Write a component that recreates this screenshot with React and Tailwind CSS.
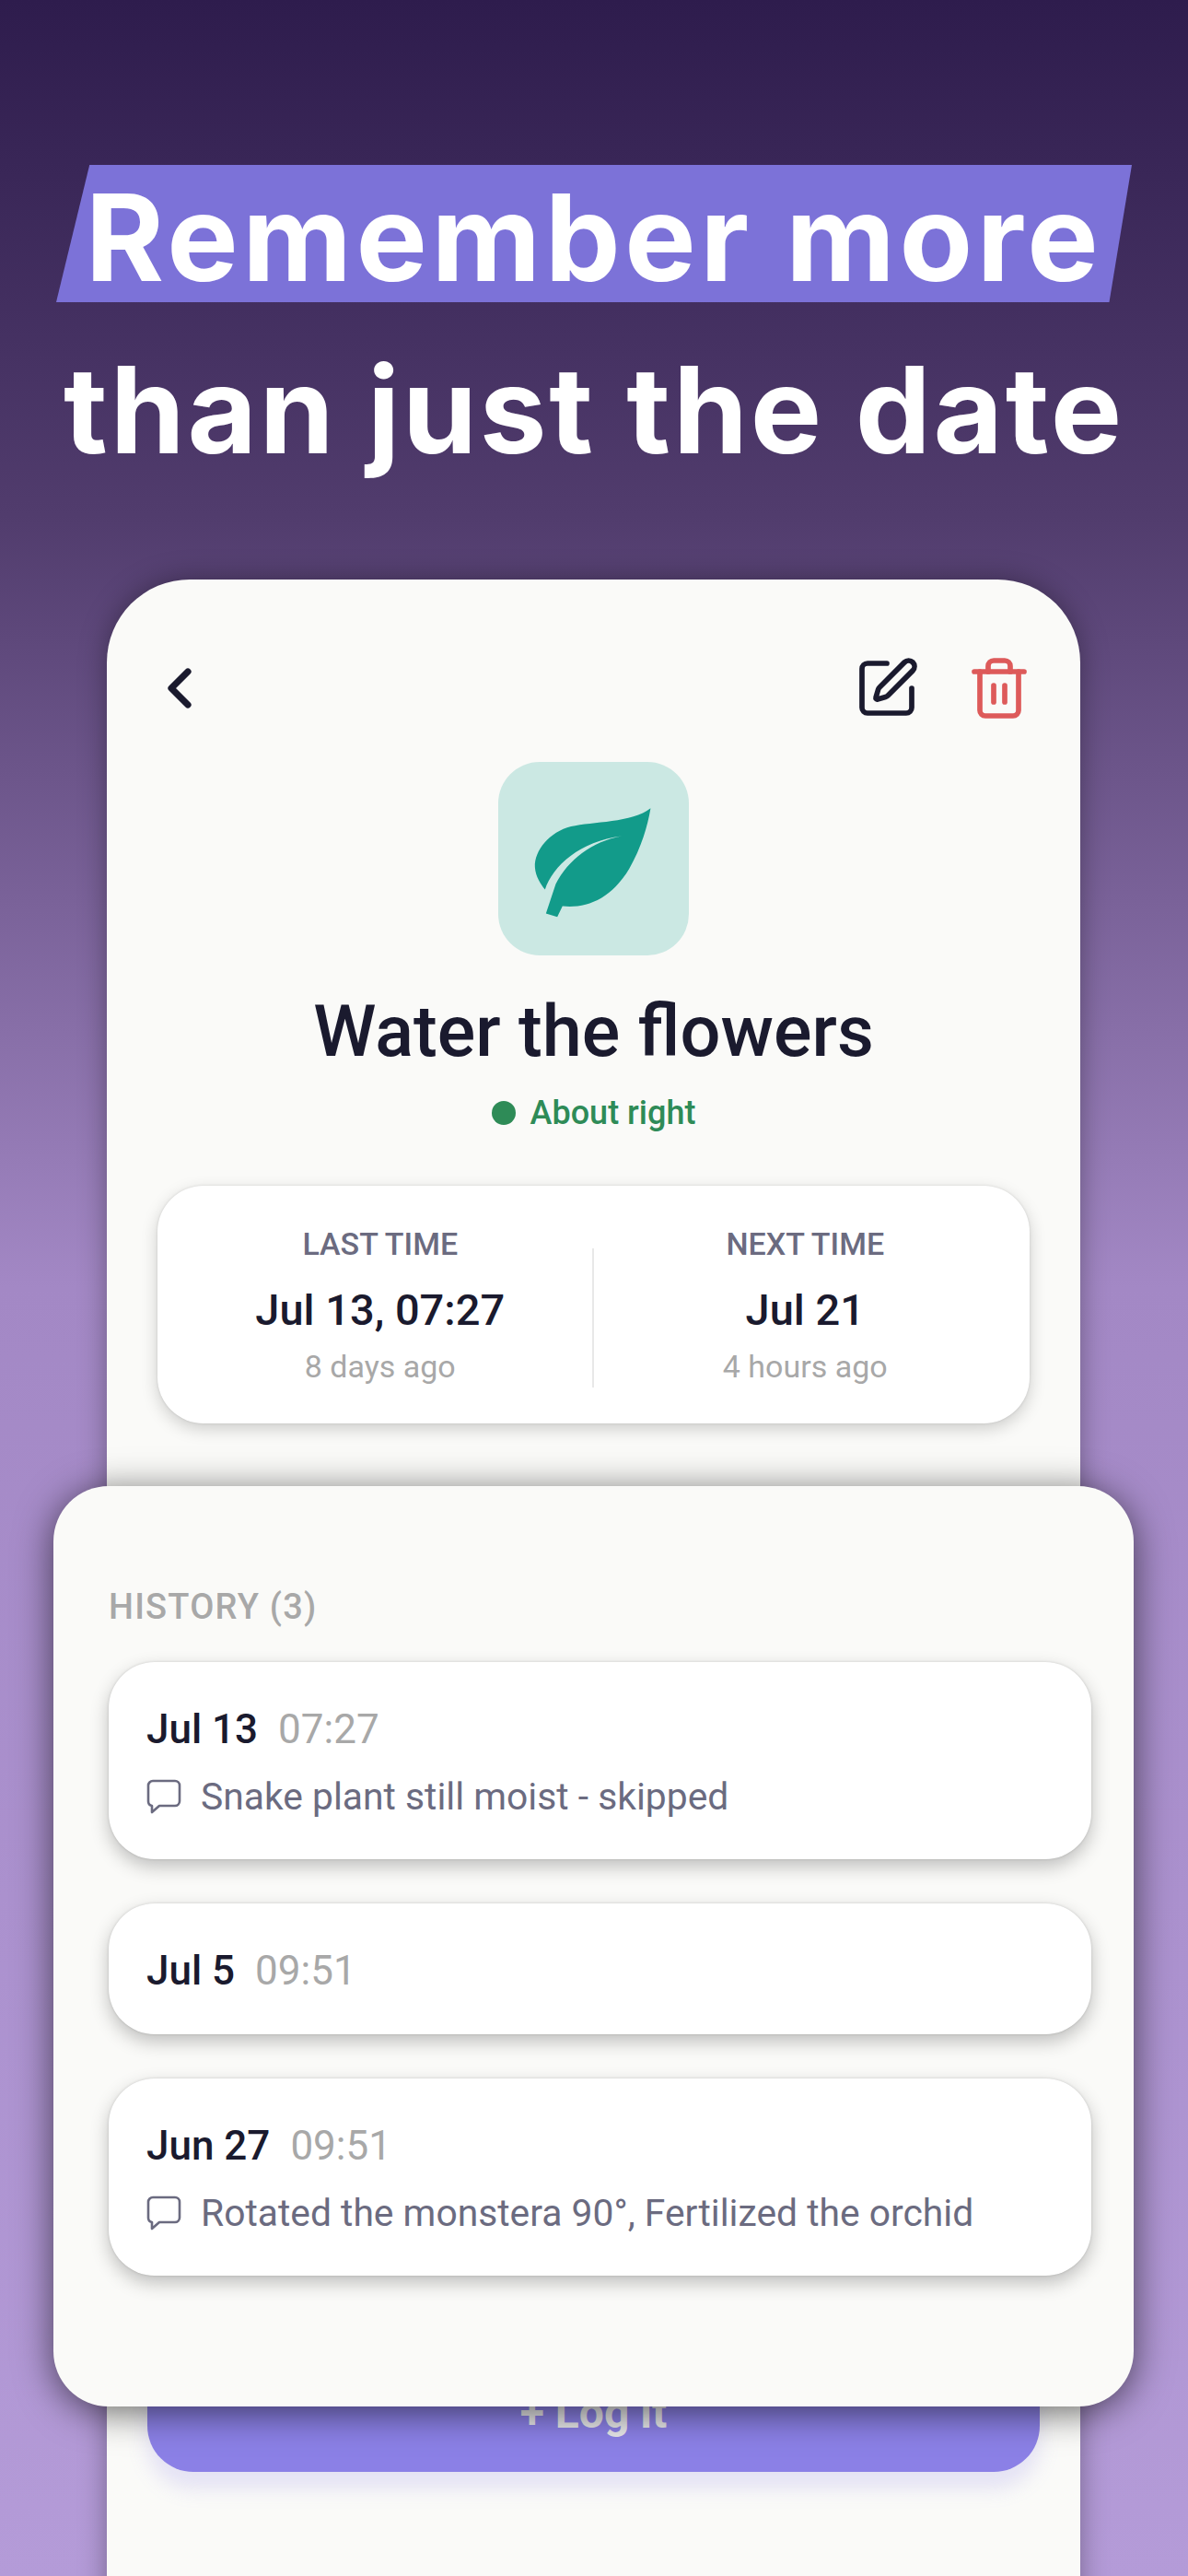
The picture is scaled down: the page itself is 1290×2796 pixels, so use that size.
import { ChevronLeft, SquarePen, Trash2 } from 'lucide-react'

function CommentIcon() {
  return (
    <svg viewBox="0 0 38 38" className="w-[38px] h-[38px] shrink-0" fill="none" stroke="#6b6b80" strokeWidth="2.6" strokeLinejoin="round">
      <path d="M7 2h24a5 5 0 0 1 5 5v17a5 5 0 0 1-5 5H14l-8 7v-7a5 5 0 0 1-4-5V7a5 5 0 0 1 5-5z" />
    </svg>
  )
}

function Leaf() {
  return (
    <svg viewBox="62 52 623 630" className="w-full h-full">
      <path
        fill="#129b8a"
        d="M560 202C500 250 370 245 300 262C230 280 180 340 182 395C184 425 200 450 215 468C240 390 330 310 465 293C370 310 290 370 250 450L218 546L255 557L272 522C350 530 430 500 490 400C530 330 550 260 560 202Z"
      />
    </svg>
  )
}

function Stat({ label, value, sub }) {
  return (
    <div className="flex-1 flex flex-col items-center">
      <p className="text-[34px] leading-[40px] font-medium text-[#6b6b80]">{label}</p>
      <p className="mt-[23px] text-[47px] leading-[58px] font-medium text-[#1a1a2e]">{value}</p>
      <p className="mt-[12px] text-[34px] leading-[40px] text-[#a8a8a8]">{sub}</p>
    </div>
  )
}

function HistoryCard({ date, time, note }) {
  return (
    <div className="rounded-[50px] bg-white pl-[41px] pr-[42px] pt-[44px] pb-[40px] shadow-[0_8px_20px_rgba(0,0,0,0.24),0_0_3px_rgba(0,0,0,0.15)]">
      <div className="flex items-baseline gap-[22px] h-[58px]">
        <span className="text-[44px] leading-[58px] font-medium text-[#1a1a2e]">{date}</span>
        <span className="text-[44px] leading-[58px] text-[#a8a8a8]">{time}</span>
      </div>
      {note && (
        <div className="mt-[16px] flex items-center gap-[21px]">
          <CommentIcon />
          <span className="text-[40.8px] leading-[56px] text-[#6b6b80]">{note}</span>
        </div>
      )}
    </div>
  )
}

export default function App() {
  return (
    <div className="relative h-[2796px] w-[1290px] overflow-hidden bg-[linear-gradient(180deg,#2e1c4d_0%,#513c6d_20%,#a388c5_50%,#b49bd8_100%)] font-['Roboto',sans-serif]">
      {/* Headline */}
      <div className="pt-[179px] font-['Inter',sans-serif] font-bold text-white">
        <div className="ml-[61px] flex h-[149px] w-[1168px] items-center justify-center bg-[#7c72d8] [clip-path:polygon(3.1%_0,100%_0,97.9%_100%,0_100%)]">
          <h1 className="whitespace-nowrap pt-[8px] text-[130px] leading-[149px] tracking-[4.6px]">Remember more</h1>
        </div>
        <h2 className="mt-[42px] whitespace-nowrap text-center text-[130px] leading-[150px] tracking-[2.8px]">than just the date</h2>
      </div>

      {/* Back card */}
      <div className="absolute left-[116px] top-[629px] h-[2300px] w-[1057px] rounded-[90px] bg-[#fafaf8] pt-[82px] shadow-[0_0_30px_rgba(0,0,0,0.35)]">
        <div className="flex items-center justify-between pl-[43px] pr-[52px]">
          <ChevronLeft size={72} strokeWidth={2.4} color="#1a1a2e" />
          <div className="flex gap-[50px]">
            <SquarePen size={72} strokeWidth={1.9} color="#1a1a2e" />
            <Trash2 size={72} strokeWidth={1.9} color="#dd5a5a" />
          </div>
        </div>

        <div className="mt-[44px] ml-[425px] h-[210px] w-[207px] rounded-[45px] bg-[#cbe8e3]">
          <Leaf />
        </div>

        <h3 className="mt-[38px] text-center text-[77.5px] leading-[90px] font-medium text-[#1a1a2e]">Water the flowers</h3>

        <div className="mt-[20px] flex items-center justify-center gap-[16px]">
          <span className="h-[26px] w-[26px] rounded-full bg-[#2e8b57]" />
          <span className="text-[36px] leading-[46px] font-medium text-[#2e8b57]">About right</span>
        </div>

        <div className="mx-[55px] mt-[56px] flex h-[258px] items-center rounded-[50px] bg-white pl-[12px] pr-[14px] shadow-[0_6px_18px_rgba(0,0,0,0.18),0_0_3px_rgba(0,0,0,0.12)]">
          <Stat label="LAST TIME" value="Jul 13, 07:27" sub="8 days ago" />
          <div className="mt-[28px] h-[151px] w-[2px] bg-[#e8e8e8]" />
          <Stat label="NEXT TIME" value="Jul 21" sub="4 hours ago" />
        </div>

        <button className="mx-[44px] mt-[1010px] h-[128px] w-[969px] rounded-[50px] bg-[#8b80e6] text-[48px] font-bold text-[#e8e8ea] shadow-[0_18px_22px_rgba(139,128,230,0.2)]">
          + Log it
        </button>
      </div>

      {/* Front sheet */}
      <div className="absolute left-[58px] top-[1613px] h-[999px] w-[1173px] rounded-[60px] bg-[#fafaf8] px-[60px] pt-[108px] shadow-[0_6px_40px_rgba(0,0,0,0.6)]">
        <p className="text-[38px] leading-[46px] font-medium tracking-[1.2px] text-[#a8a8a8]">HISTORY (3)</p>
        <div className="mt-[37px] mr-[-14px] flex flex-col gap-[48px]">
          <HistoryCard date="Jul 13" time="07:27" note="Snake plant still moist - skipped" />
          <HistoryCard date="Jul 5" time="09:51" />
          <HistoryCard date="Jun 27" time="09:51" note="Rotated the monstera 90°, Fertilized the orchid" />
        </div>
      </div>
    </div>
  )
}
